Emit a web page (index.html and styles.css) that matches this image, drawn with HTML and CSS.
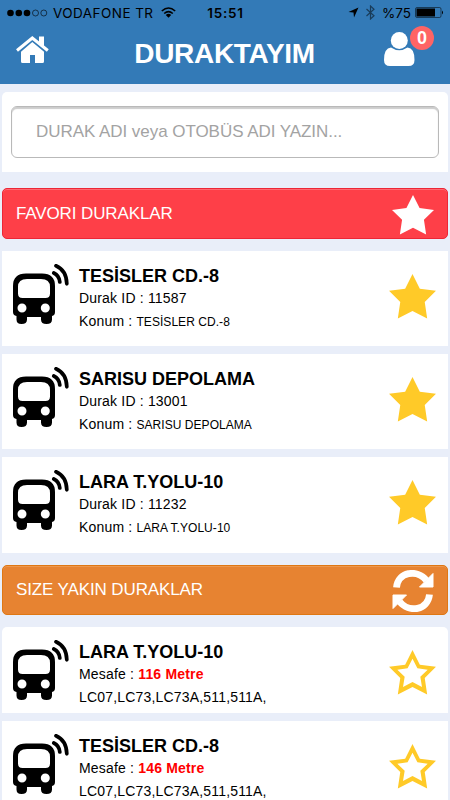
FILE: index.html
```html
<!DOCTYPE html>
<html lang="tr">
<head>
  <meta charset="UTF-8">
  <meta name="viewport" content="width=device-width, initial-scale=1.0">
  <title>Duraktayım</title>
  <link rel="stylesheet" href="styles.css">
</head>
<body>
  <svg class="sprite" width="0" height="0">
    <symbol id="bus" viewBox="0 0 56 60">
      <path fill-rule="evenodd" d="M13 9.500H29Q42 9.500 42 22V48Q42 51.500 39 52V55.500Q39 60 33.500 60Q28 60 28 55.500V53H14V55.500Q14 60 8.500 60Q3.500 60 3.500 55.500V52Q0 51.500 0 48V22Q0 9.500 13 9.500Z
        M14 15Q5 15 5 23V29.500Q5 34 9.500 34H32.500Q37 34 37 29.500V23Q37 15 28 15Z
        M9 39.500A4.500 4.500 0 1 0 9 48.500A4.500 4.500 0 1 0 9 39.500Z
        M32.300 39.500A4.500 4.500 0 1 0 32.300 48.500A4.500 4.500 0 1 0 32.300 39.500Z"/>
      <path d="M40.800 9Q46.200 11.500 46.800 18M43 1.800Q53.500 6.500 53.800 19.800" fill="none" stroke="#000" stroke-width="3.700" stroke-linecap="round"/>
    </symbol>
    <symbol id="star" viewBox="0 0 48 46">
      <path d="M24 0L31.500 15L48 17.200L36.500 28.500L39 45.500L24 37.700L9 45.500L11.500 28.500L0 17.200L16.500 15Z"/>
    </symbol>
    <symbol id="star-o" viewBox="0 0 48 46">
      <path fill-rule="evenodd" d="M24 0L31.500 15L48 17.200L36.500 28.500L39 45.500L24 37.700L9 45.500L11.500 28.500L0 17.200L16.500 15Z
        M24 9L19 18.700L8.500 20.300L16 27.300L14.300 37.700L24 32.700L33.700 37.700L32 27.300L39.500 20.300L29 18.700Z"/>
    </symbol>
  </svg>

  <header class="header">
    <div class="status">
      <div class="status-left">
        <svg width="41" height="8" viewBox="0 0 41 8">
          <circle cx="3.500" cy="4" r="3.300"/><circle cx="11.800" cy="4" r="3.300"/><circle cx="20" cy="4" r="3.300"/>
          <circle cx="28.500" cy="4" r="3" fill="none" stroke="#000" stroke-width=".6"/><circle cx="36.800" cy="4" r="3" fill="none" stroke="#000" stroke-width=".6"/>
        </svg>
        <span class="carrier">VODAFONE TR</span>
        <svg width="15" height="11" viewBox="0 0 15 11">
          <path d="M.8 4Q7.500-2 14.200 4M3.200 6.500Q7.500 2.600 11.800 6.500" fill="none" stroke="#000" stroke-width="1.600"/>
          <path d="M4.800 8Q7.500 5.700 10.200 8L7.500 10.800Z"/>
        </svg>
      </div>
      <span class="clock">15:51</span>
      <div class="status-right">
        <svg width="11" height="11" viewBox="0 0 11 11"><path d="M10.500.5L6 10.500L5.500 5.500L.5 5Z"/></svg>
        <svg class="bluetooth" width="9" height="15" viewBox="0 0 9 15"><path d="M.5 4L8 10.800L4.500 14V1L8 4.200L.5 11" fill="none" stroke="#000" stroke-width="1.200"/></svg>
        <span class="percent">%75</span>
        <svg width="29" height="11" viewBox="0 0 29 11">
          <rect x=".5" y=".5" width="25.500" height="10" rx="1.500" fill="none" stroke="#000" stroke-opacity=".65" stroke-width=".8"/>
          <rect x="1.500" y="1.500" width="18.500" height="8"/><path d="M27 3.500Q29 5.500 27 7.500Z"/>
        </svg>
      </div>
    </div>
    <div class="navbar">
      <svg class="home" width="33" height="28" viewBox="0 0 33 28">
        <path d="M1 14.500L16.300 2L31.800 14.500" fill="none" stroke="#fff" stroke-width="3"/>
        <path d="M23 .5H28V11L23 7ZM16.300 6L28 15.700V25.500Q28 27 26.500 27H19V19H14V27H6.500Q5 27 5 25.500V15.700Z"/>
      </svg>
      <h1 class="brand">DURAKTAYIM</h1>
      <div class="user">
        <svg width="31" height="34" viewBox="0 0 31 34">
          <path d="M7 15.500Q0 16 0 28Q0 34 6 34H24.500Q30.500 34 30.500 28Q30.500 16 23.500 15.500Q15.200 21 7 15.500Z"/>
          <circle cx="15.300" cy="8.500" r="8.500"/>
        </svg>
        <span class="badge">0</span>
      </div>
    </div>
  </header>

  <main class="content">
    <div class="search">
      <input class="search-input" type="text" placeholder="DURAK ADI veya OTOBÜS ADI YAZIN...">
    </div>

    <section class="group">
      <div class="bar bar-red">
        <h2 class="bar-title">FAVORI DURAKLAR</h2>
        <svg class="bar-star" width="42" height="40" viewBox="0 0 48 46" preserveAspectRatio="none"><use href="#star"/></svg>
      </div>
      <div class="list">
        <div class="stop">
          <svg class="bus" width="56" height="60"><use href="#bus"/></svg>
          <div class="info">
            <h3 class="name">TESİSLER CD.-8</h3>
            <p class="line">Durak ID : 11587</p>
            <p class="line">Konum : <small>TESİSLER CD.-8</small></p>
          </div>
          <svg class="star" width="47" height="45"><use href="#star"/></svg>
        </div>
        <div class="stop">
          <svg class="bus" width="56" height="60"><use href="#bus"/></svg>
          <div class="info">
            <h3 class="name">SARISU DEPOLAMA</h3>
            <p class="line">Durak ID : 13001</p>
            <p class="line">Konum : <small>SARISU DEPOLAMA</small></p>
          </div>
          <svg class="star" width="47" height="45"><use href="#star"/></svg>
        </div>
        <div class="stop">
          <svg class="bus" width="56" height="60"><use href="#bus"/></svg>
          <div class="info">
            <h3 class="name">LARA T.YOLU-10</h3>
            <p class="line">Durak ID : 11232</p>
            <p class="line">Konum : <small>LARA T.YOLU-10</small></p>
          </div>
          <svg class="star" width="47" height="45"><use href="#star"/></svg>
        </div>
      </div>
    </section>

    <section class="group near">
      <div class="bar bar-orange">
        <h2 class="bar-title">SIZE YAKIN DURAKLAR</h2>
        <svg class="refresh" width="42" height="42" viewBox="0 0 42 42">
          <path d="M4.500 17.500C6 2 25-1.500 34.500 10.500M37.500 24.500C36 40 17 43.500 7.500 31.500" fill="none" stroke="#fff" stroke-width="6.800"/>
          <path d="M41 3.500V17H27.500ZM1 38.500V25H14.500Z" stroke="#fff" stroke-linejoin="round"/>
        </svg>
      </div>
      <div class="list">
        <div class="stop stop-near">
          <svg class="bus" width="56" height="60"><use href="#bus"/></svg>
          <div class="info">
            <h3 class="name">LARA T.YOLU-10</h3>
            <p class="line">Mesafe : <b class="distance">116 Metre</b></p>
            <p class="line">LC07,LC73,LC73A,511,511A,</p>
          </div>
          <svg class="star" width="47" height="45"><use href="#star-o"/></svg>
        </div>
        <div class="stop stop-near">
          <svg class="bus" width="56" height="60"><use href="#bus"/></svg>
          <div class="info">
            <h3 class="name">TESİSLER CD.-8</h3>
            <p class="line">Mesafe : <b class="distance">146 Metre</b></p>
            <p class="line">LC07,LC73,LC73A,511,511A,</p>
          </div>
          <svg class="star" width="47" height="45"><use href="#star-o"/></svg>
        </div>
      </div>
    </section>
  </main>
</body>
</html>
```
FILE: styles.css
```css
* {
  box-sizing: border-box;
}

body {
  margin: 0;
  height: 800px;
  overflow: hidden;
  background: #e9eef9;
  color: #000;
  font-family: "Liberation Sans", Arial, sans-serif;
}

h1, h2, h3, p {
  margin: 0;
}

svg {
  display: block;
  flex: none;
}

.sprite {
  position: absolute;
}

/* header */
.header {
  height: 84px;
  background: #337ab7;
}

.status {
  display: grid;
  grid-template-columns: 1fr auto 1fr;
  align-items: center;
  height: 25px;
  padding: 0 6px 0 7px;
  font-family: Inter, sans-serif;
  font-size: 13.5px;
}

.status-left, .status-right {
  display: flex;
  align-items: center;
}

.status-left {
  gap: 5px;
}

.carrier {
  width: 103px;
  white-space: nowrap;
  letter-spacing: .45px;
}

.status-right {
  justify-content: flex-end;
  gap: 7px;
}

.bluetooth {
  opacity: .5;
}

.percent {
  margin-right: -3px;
}

.clock {
  font-weight: 600;
  letter-spacing: .8px;
}

.navbar {
  display: flex;
  justify-content: space-between;
  height: 59px;
  padding: 0 35px 0 16px;
}

.home {
  margin-top: 11px;
  fill: #fff;
}

.brand {
  padding-top: 13px;
  margin-left: 16px;
  color: #fff;
  font-size: 28px;
  line-height: 32px;
  letter-spacing: -.3px;
}

.user {
  position: relative;
  margin-top: 7px;
  fill: #fff;
}

.badge {
  position: absolute;
  top: -6px;
  left: 26px;
  width: 24px;
  height: 24px;
  border-radius: 50%;
  background: #ff6465;
  color: #fff;
  font-size: 18px;
  font-weight: bold;
  line-height: 25px;
  text-align: center;
}

/* content */
.content {
  padding: 8px 2px 0;
}

.search {
  height: 79.500px;
  padding: 13.500px 9px;
  border-radius: 5px 5px 0 0;
  background: #fff;
}

.search-input {
  display: block;
  width: 100%;
  height: 52.500px;
  padding: 1px 24px 0;
  border: 1px solid #b9b9b9;
  border-radius: 6px;
  box-shadow: inset 0 2px 1px #ccc;
  font-family: inherit;
  font-size: 17px;
  letter-spacing: -.05px;
}

.search-input::placeholder {
  color: #a3a3a3;
  opacity: 1;
}

.group {
  margin-top: 16.500px;
}

.near {
  margin-top: 12px;
}

.bar {
  display: flex;
  justify-content: space-between;
  align-items: center;
  height: 50.500px;
  padding: 0 13px;
  border: 1px solid;
  border-radius: 5px;
}

.bar-red {
  border-color: #ec2636;
  background: #fe3f48;
  box-shadow: inset 0 1px #ff6870;
}

.bar-orange {
  border-color: #df7713;
  background: #e78331;
  box-shadow: inset 0 1px #ed974d;
}

.bar-title {
  padding-top: 1px;
  color: #fff;
  font-size: 17px;
  font-weight: normal;
  letter-spacing: -.12px;
}

.bar-star {
  margin-top: 3px;
  fill: #fff;
}

.refresh {
  margin-top: 2px;
  fill: #fff;
}

.list {
  display: grid;
  gap: 7.500px;
  margin-top: 12px;
}

.stop {
  display: flex;
  height: 95.700px;
  padding: 13px 12px 0 11px;
  background: #fff;
}

.stop-near {
  height: 86px;
}

.stop-near:first-child {
  border-radius: 5px 5px 0 0;
}

.info {
  flex: 1;
  margin-left: 10px;
}

.name {
  padding-top: 1px;
  font-size: 18px;
  line-height: 22px;
}

.line {
  font-size: 14px;
  line-height: 23px;
  letter-spacing: .18px;
}

.line small {
  font-size: 12px;
  letter-spacing: .05px;
}

.distance {
  color: #f00;
}

.star {
  margin-top: 10px;
  fill: #ffca28;
}
```
